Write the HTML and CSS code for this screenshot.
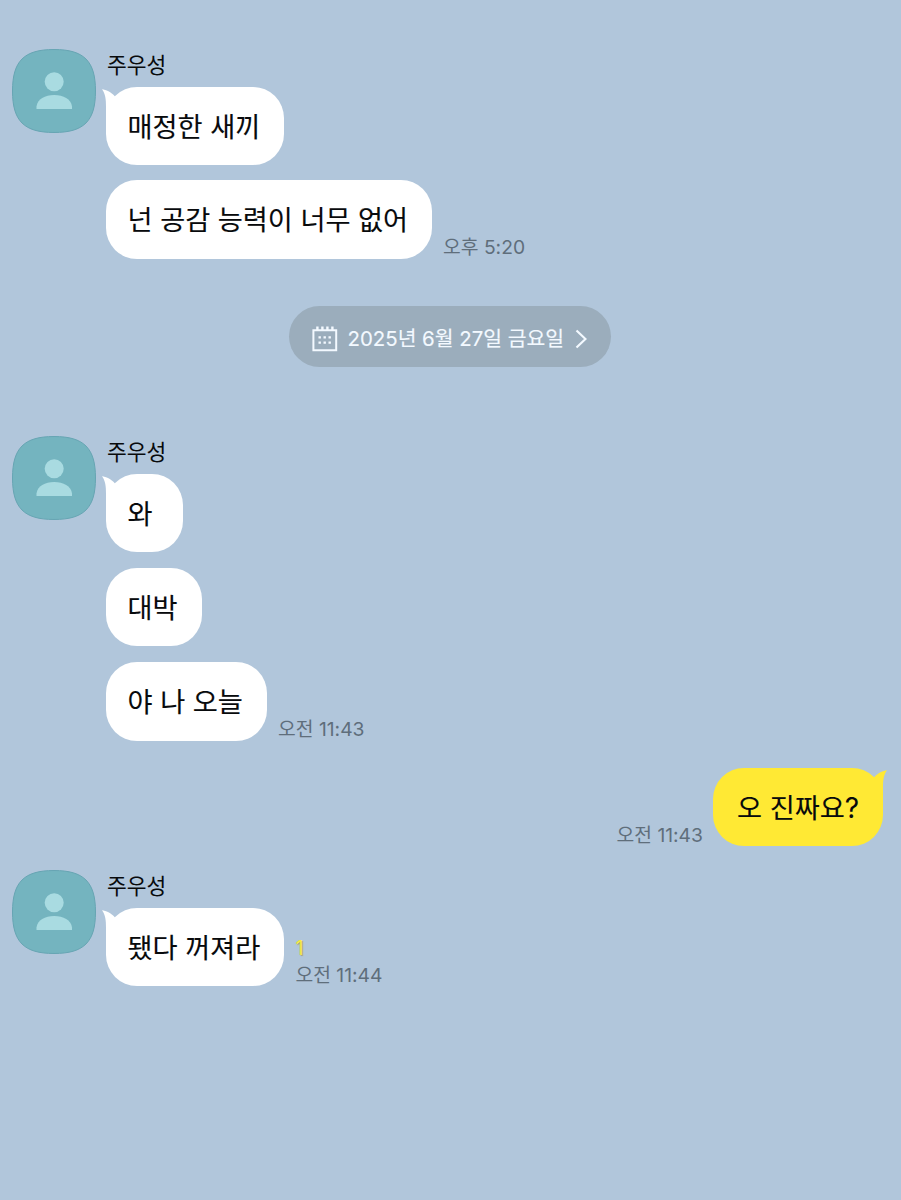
FILE: index.html
```html
<!DOCTYPE html>
<html lang="ko">
<head>
<meta charset="utf-8">
<title>채팅</title>
<link rel="stylesheet" href="styles.css">
</head>
<body>
<svg class="defs" width="0" height="0" aria-hidden="true">
  <symbol id="avatar" viewBox="0 0 84 84">
    <path d="M42 .5C72 .5 83.500 12 83.500 42S72 83.500 42 83.500 .5 72 .5 42 12 .5 42 .5Z" fill="#74b4bf" stroke="#67a5b3"/>
    <circle cx="42.200" cy="32.800" r="9.500" fill="#a9dbe1"/>
    <path d="M24.500 60V57.500C25.500 50 33 46 42.200 46S59 50 60 57.500V60Z" fill="#a9dbe1"/>
  </symbol>
  <symbol id="tail" viewBox="0 0 20 34">
    <path d="M0 2.200C4 2.800 9 4.600 13 9.500L20 12V30L4 34V20C4 12 3.500 7 0 2.200Z" fill="currentColor"/>
  </symbol>
</svg>
<main class="chat">
  <section class="group">
    <svg class="avatar"><use href="#avatar"/></svg>
    <div class="messages">
      <h2 class="name">주우성</h2>
      <div class="line"><p class="bubble w5"><svg class="tail"><use href="#tail"/></svg>매정한 새끼</p></div>
      <div class="line"><p class="bubble w10">넌 공감 능력이 너무 없어</p><time class="time">오후 5:20</time></div>
    </div>
  </section>

  <div class="date">
    <svg class="calendar" viewBox="0 0 26 26"><path d="M1.400 4.200H24.200V24.200H1.400Z" fill="none" stroke="currentColor" stroke-width="2"/><path d="M5.400 .5V5M10.400 .5V5M15.400 .5V5M20.400 .5V5" stroke="currentColor" stroke-width="2.400"/><path d="M6.500 11.400h2.400m2.600 0h2.400m2.600 0h2.400M6.500 16.600h2.400m2.600 0h2.400m2.600 0h2.400" stroke="currentColor" stroke-width="2.400"/></svg>
    <span class="date-text">2025년 6월 27일 금요일</span>
    <svg class="chevron" viewBox="0 0 12 20"><path d="M1.500 1.500L10.500 10L1.500 18.500" fill="none" stroke="currentColor" stroke-width="2.200"/></svg>
  </div>

  <section class="group">
    <svg class="avatar"><use href="#avatar"/></svg>
    <div class="messages">
      <h2 class="name">주우성</h2>
      <div class="line"><p class="bubble w1"><svg class="tail"><use href="#tail"/></svg>와</p></div>
      <div class="line"><p class="bubble w2">대박</p></div>
      <div class="line last"><p class="bubble w4">야 나 오늘</p><time class="time">오전 11:43</time></div>
    </div>
  </section>

  <section class="line mine">
    <time class="time">오전 11:43</time><p class="bubble yellow"><svg class="tail"><use href="#tail"/></svg>오 진짜요<span class="mark">?</span></p>
  </section>

  <section class="group">
    <svg class="avatar"><use href="#avatar"/></svg>
    <div class="messages">
      <h2 class="name">주우성</h2>
      <div class="line"><p class="bubble w5"><svg class="tail"><use href="#tail"/></svg>됐다 꺼져라</p><div class="status"><span class="unread">1</span><time class="time">오전 11:44</time></div></div>
    </div>
  </section>
</main>
</body>
</html>
```
FILE: styles.css
```css
* { box-sizing: border-box; }
body {
  margin: 0;
  background: #b1c6db;
  color: #080a0c;
  font-family: Inter, "Noto Sans CJK KR", sans-serif;
}
.defs { position: absolute; }
.chat {
  display: flex;
  flex-direction: column;
  min-height: 1200px;
  padding: 49px 18px 0 12px;
}
.group { display: flex; gap: 10px; }
.avatar { width: 84px; height: 84px; flex: none; }
.messages { display: flex; flex-direction: column; gap: 15.300px; }
.name {
  height: 22.300px;
  margin: 0;
  padding-left: 1px;
  font-size: 21.500px;
  font-weight: 400;
  line-height: 32px;
}
.line { display: flex; align-items: flex-end; gap: 11px; }
.line.last { margin-top: .9px; }
.bubble {
  position: relative;
  height: 78.400px;
  margin: 0;
  padding-left: 21.500px;
  border-radius: 31px;
  background: #fff;
  font-family: "Noto Sans CJK KR", sans-serif;
  font-size: 27.200px;
  line-height: 76.500px;
  white-space: nowrap;
  -webkit-text-stroke: .12px;
}
.w1 { width: 76.500px; }
.w2 { width: 96px; }
.w4 { width: 161px; }
.w5 { width: 178.400px; }
.w10 { width: 326px; }
.tail {
  position: absolute;
  left: -4px;
  top: 0;
  width: 20px;
  height: 34px;
  color: #fff;
}
.mark { font-family: Inter, sans-serif; font-size: 28px; -webkit-text-stroke: 0; }
.time {
  color: #5f6e7b;
  font-size: 19.300px;
  line-height: 23px;
  white-space: nowrap;
}
.date {
  display: flex;
  align-items: center;
  align-self: center;
  width: 322px;
  height: 61px;
  margin: 47.600px 0 69px 4px;
  padding-left: 23px;
  border-radius: 31px;
  background: #9badbc;
  color: #f3f9ff;
}
.calendar { width: 26px; height: 26px; margin: 5px 10px 0 0; }
.date-text {
  width: 216px;
  font-size: 20.400px;
  white-space: nowrap;
  -webkit-text-stroke: .12px;
}
.chevron { width: 12px; height: 20px; margin: 4px 0 0 11px; }
.mine { justify-content: flex-end; gap: 10px; margin: 27.400px 0 24px; }
.mine .time, .status .time { line-height: 22px; }
.yellow { width: 170px; padding-left: 24px; background: #ffe934; }
.yellow .tail { left: auto; right: -4px; color: #ffe934; transform: scaleX(-1); }
.status { display: flex; flex-direction: column; }
.unread { color: #f5e943; font-size: 19.500px; line-height: 31px; text-shadow: 1px 1px 1px #a7a06d; }
```
